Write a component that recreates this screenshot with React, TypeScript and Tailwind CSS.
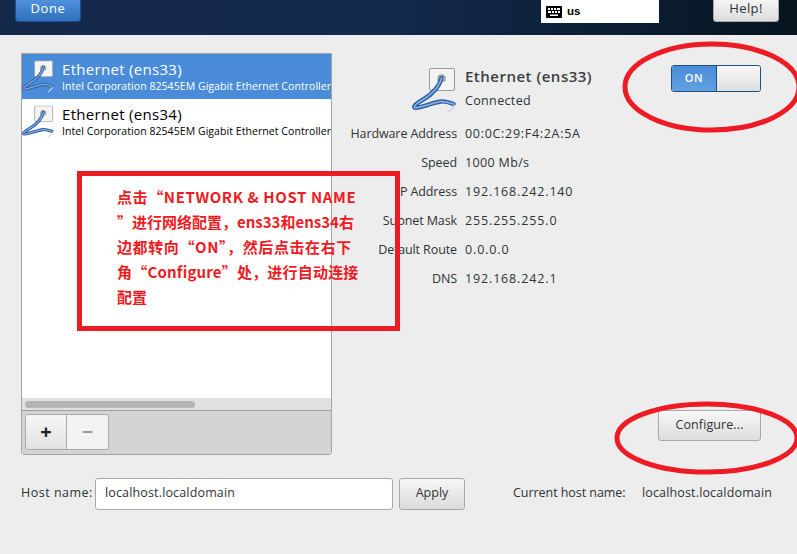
import React from 'react';

const RED = '#ed1c24';

const EthernetIcon = () => (
  <svg width="46" height="46" viewBox="0 0 46 46" fill="none">
    <rect x="17.5" y="0.5" width="25" height="22" rx="1.5" fill="#f4f4f4" stroke="#9a9a9a" />
    <path d="M26 13V8.500h1.500V7h4v1.500H33V13z" fill="#d8d8d8" stroke="#8a8a8a" strokeWidth="1" />
    <path
      d="M29.500 10C28 17 21 26 12 31C6 34.500 1 38 2.500 39.500C6 41.500 18 35 29 33.500C33 33 36 34 41.500 36"
      stroke="#2f62a8"
      strokeWidth="4.400"
      strokeLinecap="round"
    />
    <path
      d="M29.500 10C28 17 21 26 12 31C6 34.500 1 38 2.500 39.500C6 41.500 18 35 29 33.500C33 33 36 34 41.500 36"
      stroke="#8db4e3"
      strokeWidth="1.500"
      strokeLinecap="round"
    />
    <path d="M36 44C39 42 41 40 43 37" stroke="#c6d4e6" strokeWidth="1.500" />
  </svg>
);

const ListRow = ({ name, selected }: { name: string; selected?: boolean }) => (
  <div className={`h-[45px] flex items-center overflow-hidden ${selected ? 'bg-[#4a8cd8] text-white' : 'bg-white text-black'}`}>
    <div className="w-[40px] shrink-0 mt-[1px] scale-[0.72] origin-left">
      <EthernetIcon />
    </div>
    <div className="whitespace-nowrap">
      <div className="text-[15px] leading-[19px] tracking-[0.3px]">{name}</div>
      <div className="text-[10.5px] leading-[15px] tracking-[0.06px]">Intel Corporation 82545EM Gigabit Ethernet Controller</div>
    </div>
  </div>
);

const details = [
  ['Hardware Address', '00:0C:29:F4:2A:5A', 'tracking-[0.7px]'],
  ['Speed', '1000 Mb/s', 'tracking-[0.35px]'],
  ['IP Address', '192.168.242.140', 'tracking-[0.85px]'],
  ['Subnet Mask', '255.255.255.0', 'tracking-[0.85px]'],
  ['Default Route', '0.0.0.0', 'tracking-[0.85px]'],
  ['DNS', '192.168.242.1', 'tracking-[0.85px]'],
];

const notes = [
  ['点击“NETWORK & HOST NAME', 'tracking-[0.6px]'],
  ['”进行网络配置，ens33和ens34右', 'tracking-[0px]'],
  ['边都转向“ON”，然后点击在右下', 'tracking-[0.6px]'],
  ['角“Configure”处，进行自动连接', 'tracking-[0.2px]'],
  ['配置', 'tracking-[0px]'],
];

export default function App() {
  return (
    <div className="relative w-[797px] h-[554px] overflow-hidden bg-[#ededed] text-[#2e3436] text-[13px] font-['Open_Sans','Noto_Sans',sans-serif]">
      {/* top bar */}
      <div className="h-[35px] flex items-start bg-gradient-to-r from-[#14294a] via-[#13294d] to-[#06151f] pl-[15px] pr-[18px]">
        <button className="w-[66px] h-[23px] -mt-px rounded-b-[3px] border border-[#1d4f8f] bg-gradient-to-b from-[#4f92dc] to-[#2f6fbd] text-white text-[13px] tracking-[0.6px] pb-[5px] leading-none">
          Done
        </button>
        <div className="ml-auto w-[118px] h-[23px] bg-white flex items-center pl-[5px] gap-[5px] text-black font-bold text-[11.5px] font-['Liberation_Sans',sans-serif]">
          <svg width="16" height="12" viewBox="0 0 16 12">
            <rect width="16" height="12" rx="1" fill="#000" />
            <path d="M2 2h2v2H2zM5 2h2v2H5zM8 2h2v2H8zM11 2h3v2h-3zM2 5h3v2H2zM6 5h2v2H6zM9 5h2v2H9zM12 5h2v2h-2zM4 8.500h8v1.500H4z" fill="#fff" />
          </svg>
          us
        </div>
        <button className="ml-[54px] w-[66px] h-[23px] -mt-px rounded-b-[3px] border border-[#a8a8a8] bg-gradient-to-b from-[#f6f6f6] to-[#dcdcdc] text-[#2e3436] text-[13px] tracking-[0.4px] pb-[4px] leading-none">
          Help!
        </button>
      </div>

      {/* main area */}
      <div className="flex pt-[18px]">
        <div className="ml-[21px] w-[311px] h-[402px] flex flex-col border border-[#a3a3a3] rounded-b-[3px] bg-white overflow-hidden">
          <ListRow name="Ethernet (ens33)" selected />
          <ListRow name="Ethernet (ens34)" />
          <div className="flex-1" />
          <div className="h-[13px] bg-[#e0e0e0] border-b border-[#9e9e9e] pl-[3px] pt-[3px]">
            <div className="w-[170px] h-[7px] rounded-full bg-[#b4b4b4]" />
          </div>
          <div className="h-[43px] bg-[#d4d4d4] pl-[3px] pt-[3px]">
            <div className="flex w-[84px] h-[36px] rounded-[3px] border border-[#a9a9a9] overflow-hidden">
              <div className="w-[41px] flex items-center justify-center border-r border-[#a9a9a9] bg-gradient-to-b from-[#f7f7f7] to-[#e2e2e2] text-[#222] text-[20px] font-bold">+</div>
              <div className="flex-1 flex items-center justify-center bg-[#f3f3f3] text-[#9a9a9a] text-[20px] font-bold">−</div>
            </div>
          </div>
        </div>

        <div className="flex-1 relative flex flex-col">
          <div className="flex items-start justify-between pl-[80px] pr-[36px] pt-[15px]">
            <div className="flex">
              <EthernetIcon />
              <div className="ml-[7px] -mt-[2px]">
                <div className="text-[15px] leading-[20px] font-semibold tracking-[0.5px] text-[#3a3f41]">Ethernet (ens33)</div>
                <div className="mt-[6px] text-[12.5px] leading-[18px] tracking-[0.35px]">Connected</div>
              </div>
            </div>
            <div className="flex -mt-[3px] w-[90px] h-[27px] rounded-[3px] border border-[#1d4f7f] overflow-hidden">
              <div className="w-[45px] bg-gradient-to-b from-[#4a8cd8] to-[#62a0e2] border-r border-[#1d4f7f] text-white text-[11px] font-semibold tracking-[0.5px] flex items-center justify-center">ON</div>
              <div className="flex-1 bg-gradient-to-b from-[#f8f8f8] to-[#dedede]" />
            </div>
          </div>
          <div className="mt-[6px] grid grid-cols-[125px_auto] justify-start gap-x-[8px] auto-rows-[29px] items-center text-[12.5px]">
            {details.map(([label, value, spacing]) => (
              <React.Fragment key={label}>
                <div className="text-right whitespace-nowrap tracking-[-0.1px]">{label}</div>
                <div className={`whitespace-nowrap ${spacing}`}>{value}</div>
              </React.Fragment>
            ))}
          </div>
          <button className="absolute left-[326px] top-[357px] w-[103px] h-[31px] rounded-[3px] border border-[#a8a8a8] bg-gradient-to-b from-[#f7f7f7] to-[#dedede] text-[12.5px] tracking-[0.1px]">
            Configure...
          </button>
        </div>
      </div>

      {/* host name row */}
      <div className="flex items-center mt-[22px] pl-[21px] h-[33px] text-[12.5px] whitespace-nowrap">
        <span className="w-[74px] tracking-[0.5px]">Host name:</span>
        <div className="w-[298px] h-[32px] rounded-[3px] border border-[#a8a8a8] bg-white px-[9px] flex items-center tracking-[0.15px]">localhost.localdomain</div>
        <button className="ml-[6px] w-[66px] h-[32px] rounded-[3px] border border-[#a8a8a8] bg-gradient-to-b from-[#f6f6f6] to-[#dcdcdc]">Apply</button>
        <span className="ml-[48px] w-[129px] tracking-[-0.05px]">Current host name:</span>
        <span className="tracking-[0.15px]">localhost.localdomain</span>
      </div>

      {/* red annotations drawn on top of the shot */}
      <div lang="zh-CN" className="absolute left-[77px] top-[171px] w-[323px] h-[160px] border-[5px] border-[#ed1c24] pl-[35px] pt-[8px] font-['Noto_Sans_CJK_SC',sans-serif] font-bold text-[15px] leading-[25px] text-[#ed1c24] whitespace-nowrap">
        {notes.map(([line, spacing]) => (
          <div key={line} className={spacing}>{line}</div>
        ))}
      </div>
      <svg className="absolute left-[620px] top-[40px]" width="177" height="94" viewBox="0 0 177 94" fill="none">
        <ellipse cx="92" cy="47" rx="87" ry="43" stroke={RED} strokeWidth="5" />
      </svg>
      <svg className="absolute left-[612px] top-[400px]" width="185" height="76" viewBox="0 0 185 76" fill="none">
        <ellipse cx="95" cy="38" rx="90" ry="34" stroke={RED} strokeWidth="5" />
      </svg>
    </div>
  );
}
